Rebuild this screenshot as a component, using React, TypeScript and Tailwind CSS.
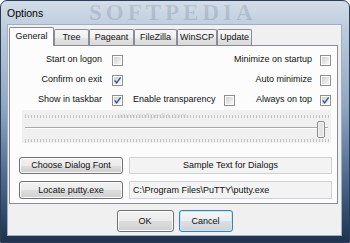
import React from "react";

function Cb({ checked, id }: { checked?: boolean; id: string }) {
  return (
    <svg width="11" height="11" viewBox="0 0 11 11" className="shrink-0 block">
      <defs>
        <linearGradient id={id} x1="0" y1="0" x2="1" y2="1">
          <stop offset="0" stopColor="#cdd0d4" />
          <stop offset="1" stopColor="#f7f7f7" />
        </linearGradient>
      </defs>
      <rect x="0.5" y="0.5" width="10" height="10" fill="#ffffff" stroke="#8e8f8f" />
      <rect x="2" y="2" width="7" height="7" fill={`url(#${id})`} />
      {checked && (
        <path d="M2.6 5.4 L4.6 7.9 L8.6 2.4" fill="none" stroke="#3b4f91" strokeWidth="1.4" />
      )}
    </svg>
  );
}

function Tab({ label, w, selected }: { label: string; w: number; selected?: boolean }) {
  return (
    <div
      style={{ width: w }}
      className={
        selected
          ? "h-[19px] -mb-px z-10 flex items-center justify-center border border-b-0 border-[#898c95] bg-[#fcfcfc] rounded-t-[2px] pb-[2px]"
          : "h-[16px] flex items-center justify-center border border-b-0 border-[#898c95] bg-[linear-gradient(180deg,#f7f7f7_0%,#efefef_50%,#e5e5e5_51%,#dadada_100%)] rounded-t-[2px]"
      }
    >
      <span className="leading-none whitespace-nowrap">{label}</span>
    </div>
  );
}

function Btn({ label, w, h, def }: { label: string; w: number; h: number; def?: boolean }) {
  return (
    <div
      style={{ width: w, height: h }}
      className={
        def
          ? "flex items-center justify-center rounded-[3px] border border-[#3c7fb1] bg-[linear-gradient(180deg,#f3f6f8_0%,#eaeef1_50%,#dbe0e4_51%,#ccd3d8_100%)] shadow-[inset_0_0_0_1px_#c7e6f8]"
          : "flex items-center justify-center rounded-[3px] border border-[#707070] bg-[linear-gradient(180deg,#f2f2f2_0%,#ebebeb_50%,#dddddd_51%,#cfcfcf_100%)] shadow-[inset_0_0_0_1px_#fbfbfb]"
      }
    >
      <span className="leading-none whitespace-nowrap">{label}</span>
    </div>
  );
}

function Slider() {
  const ticks: number[] = [];
  for (let x = 3; x <= 307; x += 3) ticks.push(x);
  return (
    <svg width="309" height="33" viewBox="0 0 309 33" className="block">
      {ticks.map((x, i) => (
        <rect key={"t" + i} x={x} y={i === 0 ? 4 : 5} width="1" height={i === 0 ? 4 : 3} fill="#c4c4c4" />
      ))}
      {ticks.map((x, i) => (
        <rect key={"b" + i} x={x} y={29} width="1" height={i === 0 ? 4 : 3} fill="#c4c4c4" />
      ))}
      <rect x="3" y="17" width="303" height="1" fill="#a9a9a9" />
      <rect x="3" y="18" width="303" height="1" fill="#ffffff" />
      <rect x="295.5" y="11.5" width="7" height="16" rx="1.5" fill="#f3f3f3" stroke="#8c8c8c" />
      <rect x="297" y="13" width="4" height="13" fill="#e4e4e4" />
    </svg>
  );
}

export default function App() {
  return (
    <div className="w-[350px] h-[243px] font-['Liberation_Sans',Arial,sans-serif] text-[9px] text-[#111]">
      <div className="relative w-[350px] h-[243px] flex flex-col rounded-t-[7px] border border-[#2b3d57] bg-[linear-gradient(180deg,#d3dde8_0%,#bccbdc_12%,#8ea5c0_45%,#4a6688_75%,#1e3250_100%)] pl-[6px] pr-[7px] pb-[6px]">
        <div className="relative h-[23px] flex items-center overflow-hidden">
          <span className="absolute left-[82px] top-[0px] font-['Liberation_Serif',serif] font-bold text-[23px] tracking-[4px] text-[rgba(40,62,96,0.16)] leading-none select-none whitespace-nowrap">
            SOFTPEDIA
          </span>
          <span className="relative text-[10.5px] text-black leading-none pt-[1px]">Options</span>
        </div>
        <div className="flex-1 flex flex-col bg-[#f0f0f0] border border-[#9fb0c4]">
          <div className="flex items-end pl-[1px] pt-[2px] h-[20px]">
            <Tab label="General" w={45} selected />
            <Tab label="Tree" w={35} />
            <Tab label="Pageant" w={45} />
            <Tab label="FileZilla" w={43} />
            <Tab label="WinSCP" w={40} />
            <Tab label="Update" w={35} />
          </div>
          <div className="ml-[1px] mr-[3px] h-[159px] border border-[#898c95] bg-[#fcfcfc] flex flex-col pt-[4px]">
            {[
              ["Start on logon", false, "", null, "Minimize on startup", false],
              ["Confirm on exit", true, "", null, "Auto minimize", false],
              ["Show in taskbar", true, "Enable transparency", false, "Always on top", true],
            ].map((r, i) => (
              <div key={i} className="flex h-[20px] items-center whitespace-nowrap">
                <div className="w-[113px] shrink-0 flex items-center justify-end gap-[10px]">
                  <span>{r[0] as string}</span>
                  <Cb id={"a" + i} checked={r[1] as boolean} />
                </div>
                <div className="w-[112px] shrink-0 pl-[10px] flex items-center justify-between">
                  {r[2] ? (
                    <>
                      <span>{r[2] as string}</span>
                      <Cb id={"b" + i} checked={r[3] as boolean} />
                    </>
                  ) : null}
                </div>
                <div className="flex-1 min-w-0 flex items-center justify-end gap-[8px] pr-[6px]">
                  <span>{r[4] as string}</span>
                  <Cb id={"c" + i} checked={r[5] as boolean} />
                </div>
              </div>
            ))}
            <div className="relative ml-[12px] w-[309px] h-[33px] bg-[#f0f0f0]">
              <Slider />
              <span className="absolute left-[96px] top-[2px] text-[8px] text-[rgba(150,150,150,0.35)] leading-none whitespace-nowrap">
                www.softpedia.com
              </span>
            </div>
            <div className="flex items-center gap-[6px] ml-[9px] mt-[14px]">
              <Btn label="Choose Dialog Font" w={104} h={17} />
              <div className="w-[203px] h-[17px] flex items-center justify-center border border-[#cfd1d4] bg-[#f3f3f3]">
                <span className="leading-none whitespace-nowrap">Sample Text for Dialogs</span>
              </div>
            </div>
            <div className="flex items-center gap-[6px] ml-[9px] mt-[7px]">
              <Btn label="Locate putty.exe" w={104} h={18} />
              <div className="w-[203px] h-[18px] flex items-center pl-[3px] border border-[#cfd1d4] bg-[#f3f3f3]">
                <span className="leading-none whitespace-nowrap">C:\Program Files\PuTTY\putty.exe</span>
              </div>
            </div>
          </div>
          <div className="flex justify-center gap-[5px] mt-[6px]">
            <Btn label="OK" w={57} h={22} />
            <Btn label="Cancel" w={54} h={22} def />
          </div>
        </div>
      </div>
    </div>
  );
}
